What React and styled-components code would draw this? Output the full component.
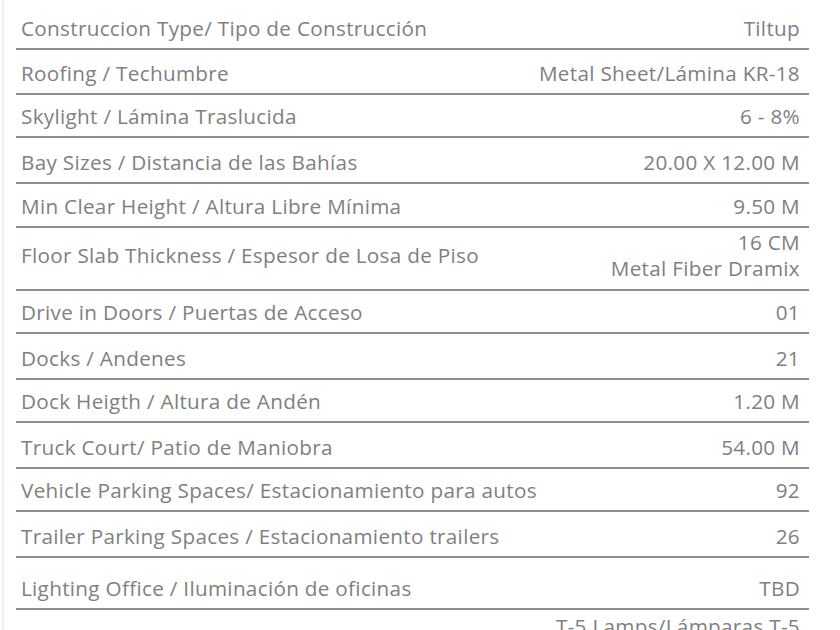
import React from "react";
import styled, { createGlobalStyle } from "styled-components";

const GlobalStyle = createGlobalStyle`
  html, body {
    margin: 0;
    padding: 0;
    background: #ffffff;
  }
  body {
    font-family: "Open Sans", Lato, "Liberation Sans", sans-serif;
  }
`;

const Page = styled.div`
  width: 840px;
  height: 630px;
  overflow: hidden;
  box-sizing: border-box;
  padding-left: 2px;
`;

const Sheet = styled.div`
  border-left: 2px solid #efefef;
  padding: 0 31px 0 12px;
  height: 100%;
`;

const Row = styled.div`
  display: flex;
  justify-content: space-between;
  align-items: ${props =>
    props.align === "center" ? "center" : props.align === "top" ? "flex-start" : "flex-end"};
  height: ${props => props.h}px;
  box-sizing: border-box;
  border-bottom: 2px solid #8d8d8d;
  padding: ${props => (props.align === "top" ? "4px 9px 0 5px" : "0 9px 8px 5px")};
  color: #808080;
  font-size: 20.7px;
  letter-spacing: 0.3px;
  line-height: 24px;
`;

const Label = styled.span`
  white-space: nowrap;
`;

const Value = styled.span`
  text-align: right;
  white-space: nowrap;
  line-height: ${props => (props.multi ? "26px" : "24px")};
`;

const specs = [
  { label: "Construccion Type/ Tipo de Construcción", value: ["Tiltup"], h: 50 },
  { label: "Roofing / Techumbre", value: ["Metal Sheet/Lámina KR-18"], h: 45 },
  { label: "Skylight / Lámina Traslucida", value: ["6 - 8%"], h: 43 },
  { label: "Bay Sizes / Distancia de las Bahías", value: ["20.00 X 12.00 M"], h: 46 },
  { label: "Min Clear Height / Altura Libre Mínima", value: ["9.50 M"], h: 44 },
  {
    label: "Floor Slab Thickness / Espesor de Losa de Piso",
    value: ["16 CM", "Metal Fiber Dramix"],
    h: 63,
    align: "center"
  },
  { label: "Drive in Doors / Puertas de Acceso", value: ["01"], h: 43 },
  { label: "Docks / Andenes", value: ["21"], h: 46 },
  { label: "Dock Heigth / Altura de Andén", value: ["1.20 M"], h: 43 },
  { label: "Truck Court/ Patio de Maniobra", value: ["54.00 M"], h: 46 },
  { label: "Vehicle Parking Spaces/ Estacionamiento para autos", value: ["92"], h: 43 },
  { label: "Trailer Parking Spaces / Estacionamiento trailers", value: ["26"], h: 46 },
  { label: "Lighting Office / Iluminación de oficinas", value: ["TBD"], h: 52 },
  { label: "", value: ["T-5 Lamps/Lámparas T-5"], h: 52, align: "top" }
];

export default function App() {
  return (
    <Page>
      <GlobalStyle />
      <Sheet>
        {specs.map((s, i) => (
          <Row key={i} h={s.h} align={s.align}>
            <Label>{s.label}</Label>
            <Value multi={s.value.length > 1}>
              {s.value.map((v, j) => (
                <div key={j}>{v}</div>
              ))}
            </Value>
          </Row>
        ))}
      </Sheet>
    </Page>
  );
}
